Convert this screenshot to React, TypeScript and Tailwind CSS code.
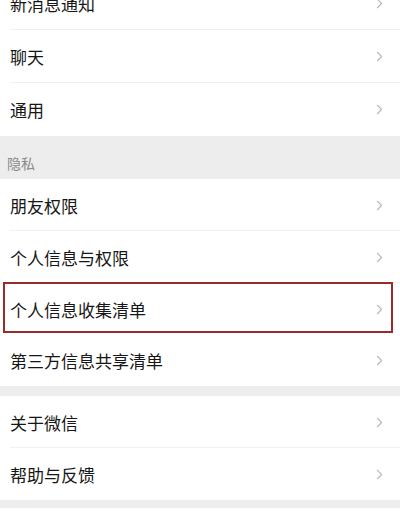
import { ChevronRight } from 'lucide-react';

type TRowProps = {
  label: string;
  divider?: boolean;
  highlighted?: boolean;
  height?: string;
};

const SettingRow = ({ label, divider = true, highlighted = false, height = 'h-[52px]' }: TRowProps) => (
  <div className={['relative flex items-center bg-white pl-[10px] pr-[12px]', height].join(' ')}>
    <span className="flex-1 text-[17px] leading-none text-[#161616]">{label}</span>
    <ChevronRight className="size-[17px] text-[#b8b8b8]" strokeWidth={1.5} />
    {divider && <div className="absolute bottom-0 left-[10px] right-0 h-px bg-[#f0f0f0]" />}
    {highlighted && (
      <div className="pointer-events-none absolute -top-[1px] bottom-[2px] left-[3px] right-[7px] border-[2.5px] border-[#992a2a]" />
    )}
  </div>
);

export default function App() {
  return (
    <div
      className="h-[528px] w-[400px] overflow-hidden bg-white"
      style={{ fontFamily: '"Noto Sans CJK SC", "Noto Sans", sans-serif' }}>
      <div className="-mt-[23px] flex flex-col">
        <SettingRow label="新消息通知" height="h-[53px]" />
        <SettingRow label="聊天" height="h-[53px]" />
        <SettingRow label="通用" height="h-[53px]" divider={false} />

        <div className="flex h-[43px] items-end bg-[#ededed] pb-[9px] pl-[7px] text-[14px] leading-none text-[#8a8a8a]">
          隐私
        </div>

        <SettingRow label="朋友权限" />
        <SettingRow label="个人信息与权限" />
        <SettingRow label="个人信息收集清单" highlighted divider={false} />
        <SettingRow label="第三方信息共享清单" height="h-[51px]" divider={false} />

        <div className="h-[10px] bg-[#ededed]" />

        <SettingRow label="关于微信" />
        <SettingRow label="帮助与反馈" divider={false} />

        <div className="h-[8px] bg-[#ededed]" />

        <div className="h-[40px] bg-white" />
      </div>
    </div>
  );
}
